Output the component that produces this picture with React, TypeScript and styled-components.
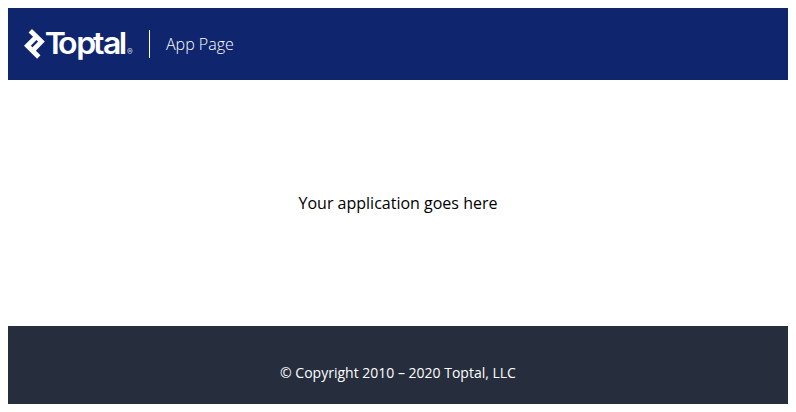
import React from 'react';
import styled, { createGlobalStyle } from 'styled-components';

const GlobalStyle = createGlobalStyle`
  body {
    margin: 8px;
    background: #fff;
    font-family: 'Open Sans', sans-serif;
  }
`;

const Page = styled.div`
  display: flex;
  flex-direction: column;
  height: 396px;
`;

const Header = styled.header`
  display: flex;
  align-items: center;
  flex: 0 0 72px;
  box-sizing: border-box;
  padding: 0 16px;
  background: #0f256e;
  color: #fff;
`;

const Brand = styled.div`
  display: flex;
  align-items: center;
  width: 109px;
  height: 30px;
`;

const Mark = styled.svg`
  flex: none;
  width: 22px;
  height: 30px;
  fill: none;
  stroke: #fff;
  stroke-width: 4.8;
`;

const Wordmark = styled.svg`
  flex: none;
  width: 81px;
  height: 30px;
  overflow: visible;
  fill: #fff;
  font-family: Inter, sans-serif;
`;

const Registered = styled.span`
  width: 6px;
  margin-top: 16px;
  font-family: Inter, sans-serif;
  font-size: 8.5px;
  line-height: 8px;
  opacity: 0.8;
`;

const Divider = styled.div`
  width: 1px;
  height: 28px;
  margin: 0 16px;
  background: #fff;
`;

const Title = styled.span`
  font-size: 16px;
  line-height: 24px;
  font-weight: 300;
`;

const Content = styled.main`
  display: flex;
  flex: 1;
  align-items: center;
  justify-content: center;
  font-size: 16px;
  line-height: 24px;
  color: #000;
`;

const Footer = styled.footer`
  display: flex;
  flex: 0 0 78px;
  box-sizing: border-box;
  align-items: center;
  justify-content: center;
  padding-top: 16px;
  background: #262d3d;
  color: #fff;
  font-size: 14px;
  line-height: 22px;
`;

export default function App() {
  return (
    <Page>
      <GlobalStyle />
      <Header>
        <Brand>
          <Mark viewBox="0 0 22 30">
            <path d="M6.3 1.8 17.4 12.6 7.5 22.7" />
            <path d="M14.8 28 3.4 16.8 13 7.1" />
          </Mark>
          <Wordmark viewBox="0 0 81 30">
            <text transform="scale(1.07 1)" x="-1.2 11.2 28.3 44 53.3 68" y="24.5" fontSize="30" fontWeight="600">
              Toptal
            </text>
          </Wordmark>
          <Registered>®</Registered>
        </Brand>
        <Divider />
        <Title>App Page</Title>
      </Header>
      <Content>Your application goes here</Content>
      <Footer>© Copyright 2010 – 2020 Toptal, LLC</Footer>
    </Page>
  );
}
